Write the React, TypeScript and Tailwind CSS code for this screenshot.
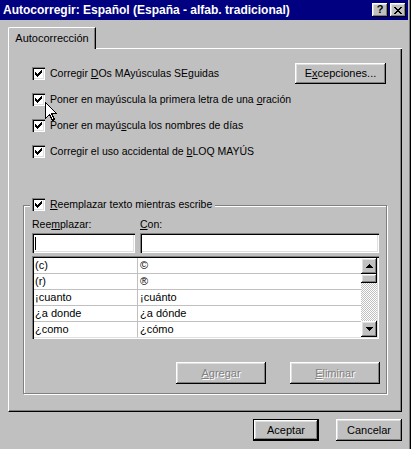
import React from 'react';

const raised =
  'shadow-[inset_-1px_-1px_0_#000,inset_1px_1px_0_#fff,inset_-2px_-2px_0_#808080,inset_2px_2px_0_#dfdfdf]';
const sunken =
  'shadow-[inset_1px_1px_0_#808080,inset_2px_2px_0_#000,inset_-1px_-1px_0_#fff,inset_-2px_-2px_0_#dfdfdf]';

const Check: React.FC = () => (
  <span className={`w-[13px] h-[13px] shrink-0 bg-white flex items-center justify-center ${sunken}`}>
    <svg width="7" height="7" viewBox="0 0 7 7" shapeRendering="crispEdges">
      <path d="M0 2h1v3H0zM1 3h1v3H1zM2 4h1v3H2zM3 3h1v3H3zM4 2h1v3H4zM5 1h1v3H5zM6 0h1v3H6z" fill="#000" />
    </svg>
  </span>
);

const CheckRow: React.FC<{ children: React.ReactNode; className?: string }> = ({ children, className }) => (
  <div className={`flex items-center h-[13px] gap-[5px] ${className ?? ''}`}>
    <Check />
    <span className="leading-[13px] whitespace-nowrap">{children}</span>
  </div>
);

const Arrow: React.FC<{ down?: boolean }> = ({ down }) => (
  <svg width="7" height="4" viewBox="0 0 7 4" shapeRendering="crispEdges">
    <path d={down ? 'M0 0h7v1H0zM1 1h5v1H1zM2 2h3v1H2zM3 3h1v1H3z' : 'M3 0h1v1H3zM2 1h3v1H2zM1 2h5v1H1zM0 3h7v1H0z'} fill="#000" />
  </svg>
);

const rows: [string, string][] = [
  ['(c)', '©'],
  ['(r)', '®'],
  ['¡cuanto', '¡cuánto'],
  ['¿a donde', '¿a dónde'],
  ['¿como', '¿cómo'],
];

const disabled = 'text-[#808080] [text-shadow:1px_1px_0_#fff]';

export default function App() {
  return (
    <div className="w-[412px] h-[449px] flex bg-white font-['Liberation_Sans',Arial,sans-serif] text-[10.5px] text-black overflow-hidden">
      <div className="relative w-[411px] h-full bg-[#c0c0c0] border-r border-black shadow-[inset_-1px_0_0_#808080] flex flex-col">
        {/* title bar */}
        <div className="w-[408px] h-[20px] bg-[#000080] flex items-center pl-[3px] pr-[2px]">
          <span className="flex-1 text-white font-bold text-[12px] leading-[14px] whitespace-nowrap">
            Autocorregir: Español (España - alfab. tradicional)
          </span>
          <div className="flex gap-[2px]">
            <div className={`w-[16px] h-[14px] bg-[#c0c0c0] ${raised} flex items-center justify-center font-bold text-[11px] leading-none pb-[1px]`}>?</div>
            <div className={`w-[16px] h-[14px] bg-[#c0c0c0] ${raised} flex items-center justify-center`}>
              <svg width="8" height="7" viewBox="0 0 8 7" shapeRendering="crispEdges">
                <path d="M0 0h2v1H0zM6 0h2v1H6zM1 1h2v1H1zM5 1h2v1H5zM2 2h4v1H2zM3 3h2v1H3zM2 4h4v1H2zM1 5h2v1H1zM5 5h2v1H5zM0 6h2v1H0zM6 6h2v1H6z" fill="#000" />
              </svg>
            </div>
          </div>
        </div>

        {/* tab strip */}
        <div className="flex items-end h-[22px] mt-[7px] ml-[8px] w-[394px]">
          <div className="h-[22px] w-[88px] border-t border-l border-white border-r border-r-black rounded-tl-[2px] shadow-[inset_-1px_0_0_#808080] flex items-center justify-center text-[11px]">
            Autocorrección
          </div>
          <div className="flex-1 h-full border-b border-white" />
        </div>

        {/* panel */}
        <div className="ml-[8px] w-[394px] h-[363px] border-l border-white border-r border-r-black border-b border-b-black shadow-[inset_-1px_-1px_0_#808080] flex flex-col">
          <div className="mt-[14px] h-[21px] pl-[23px] pr-[15px] flex items-center justify-between">
            <CheckRow>
              Corregir <u>D</u>Os MAyúsculas SEguidas
            </CheckRow>
            <button className={`w-[91px] h-[21px] ${raised} flex items-center justify-center text-[11px]`}>
              E<u>x</u>cepciones...
            </button>
          </div>
          <CheckRow className="mt-[9px] ml-[23px]">
            Poner en mayúscula la primera letra de una <u>o</u>ración
          </CheckRow>
          <CheckRow className="mt-[13px] ml-[23px]">
            Poner en mayú<u>s</u>cula los nombres de días
          </CheckRow>
          <CheckRow className="mt-[13px] ml-[23px]">
            Corregir el uso accidental de <u>b</u>LOQ MAYÚS
          </CheckRow>

          {/* group box */}
          <div className="mt-[47px] ml-[14px] w-[364px] h-[189px] border border-[#808080] shadow-[inset_1px_1px_0_#fff,1px_1px_0_#fff] flex flex-col">
            <div className="-mt-[8px] ml-[6px] pl-[2px] pr-[3px] self-start bg-[#c0c0c0]">
              <CheckRow>
                <u>R</u>eemplazar texto mientras escribe
              </CheckRow>
            </div>
            <div className="mt-[7px] ml-[8px] flex leading-[13px]">
              <span className="w-[108px]">
                Ree<u>m</u>plazar:
              </span>
              <span>
                <u>C</u>on:
              </span>
            </div>
            <div className="mt-[2px] ml-[8px] flex gap-[5px]">
              <div className={`w-[103px] h-[20px] bg-white ${sunken} flex items-center pl-[3px]`}>
                <div className="w-[1px] h-[13px] bg-black" />
              </div>
              <div className={`w-[239px] h-[20px] bg-white ${sunken}`} />
            </div>
            <div className={`mt-[3px] ml-[8px] w-[347px] h-[83px] bg-white ${sunken} p-[2px] flex text-[11px]`}>
              <div className="flex-1 flex flex-col overflow-hidden">
                {rows.map(([a, b]) => (
                  <div key={a} className="h-[16px] shrink-0 flex border-b border-[#c0c0c0] leading-[15px]">
                    <span className="w-[104px] pl-[1px] border-r border-[#c0c0c0]">{a}</span>
                    <span className="pl-[2px]">{b}</span>
                  </div>
                ))}
              </div>
              <div className="w-[16px] flex flex-col">
                <div className={`h-[16px] shrink-0 bg-[#c0c0c0] ${raised} flex items-center justify-center`}>
                  <Arrow />
                </div>
                <div className={`h-[9px] shrink-0 bg-[#c0c0c0] ${raised}`} />
                <div className="flex-1 bg-[repeating-conic-gradient(#fff_0_25%,#c0c0c0_0_50%)] bg-[length:2px_2px]" />
                <div className={`h-[16px] shrink-0 bg-[#c0c0c0] ${raised} flex items-center justify-center`}>
                  <Arrow down />
                </div>
              </div>
            </div>
            <div className="mt-[23px] ml-[152px] flex gap-[24px] text-[11px]">
              <div className={`w-[90px] h-[22px] ${raised} flex items-center justify-center ${disabled}`}>
                <u>A</u>gregar
              </div>
              <div className={`w-[90px] h-[22px] ${raised} flex items-center justify-center ${disabled}`}>
                <u>E</u>liminar
              </div>
            </div>
          </div>
        </div>

        {/* bottom buttons */}
        <div className="mt-[7px] ml-[253px] flex gap-[17px] text-[11px]">
          <button className={`w-[66px] h-[22px] border border-black ${raised} flex items-center justify-center`}>
            Aceptar
          </button>
          <button className={`w-[66px] h-[22px] ${raised} flex items-center justify-center`}>
            Cancelar
          </button>
        </div>

        {/* mouse pointer */}
        <svg className="absolute left-[45px] top-[102px]" width="13" height="20" viewBox="0 0 13 20" shapeRendering="crispEdges">
          <path d="M0.5 0.5V16.5L4.5 12.5L7.5 18.5L9.5 17.5L6.5 11.5H11.5Z" fill="#fff" stroke="#000" strokeWidth="1" />
        </svg>
      </div>
    </div>
  );
}
